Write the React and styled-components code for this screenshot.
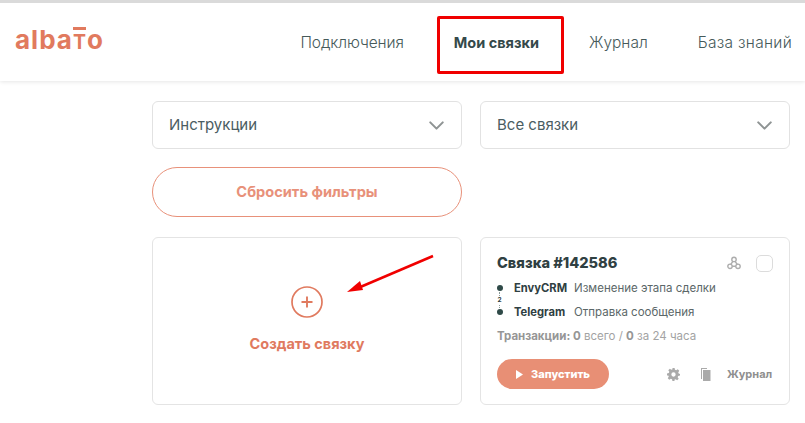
import React from "react";
import styled, { createGlobalStyle } from "styled-components";
import { ChevronDown } from "lucide-react";

const Global = createGlobalStyle`
  html, body {
    margin: 0;
    padding: 0;
    background: #fff;
    font-family: "Inter", "Noto Sans", sans-serif;
  }
`;

const Page = styled.div`
  position: relative;
  width: 805px;
  height: 423px;
  overflow: hidden;
  border-top: 3px solid #dadada;
  box-sizing: border-box;
`;

const Header = styled.header`
  height: 78px;
  padding-left: 15px;
  display: flex;
  align-items: center;
  justify-content: space-between;
  box-shadow: 0 1px 4px rgba(0, 0, 0, 0.1);
`;

const Logo = styled.div`
  font-size: 26px;
  line-height: 26px;
  font-weight: 700;
  letter-spacing: 1px;
  color: #e17a5e;
  margin-top: -3px;
`;

const LogoT = styled.span`
  position: relative;
  font-size: 19.5px;

  &::before {
    content: "";
    position: absolute;
    left: 0;
    right: 1px;
    top: -3px;
    height: 3px;
    background: #e17a5e;
  }
`;

const Nav = styled.nav`
  display: flex;
  align-items: center;
  padding-right: 13px;
  gap: 50px;
`;

const NavLink = styled.a`
  font-size: 15.5px;
  letter-spacing: ${(p) => p.$tracking || 0}px;
  font-weight: 300;
  color: #465a5a;
`;

const ActiveNavLink = styled.a`
  font-size: 14.5px;
  font-weight: 700;
  color: #34494a;
`;

const Main = styled.main`
  display: grid;
  grid-template-columns: 310px 310px;
  column-gap: 18px;
  padding: 20px 0 0 152px;
`;

const Select = styled.div`
  height: 48px;
  box-sizing: border-box;
  border: 1px solid #e2e2e2;
  border-radius: 6px;
  padding: 0 12px 2px 16px;
  display: flex;
  align-items: center;
  justify-content: space-between;
  font-size: 15px;
  color: #4b5d62;
  margin-bottom: 18px;

  svg {
    color: #8f9494;
    margin-top: 2px;
  }
`;

const ResetButton = styled.button`
  grid-column: 1;
  height: 50px;
  border: 1px solid #e8917a;
  border-radius: 25px;
  background: #fff;
  color: #e8917a;
  font-family: inherit;
  font-size: 14.6px;
  font-weight: 700;
  padding: 0 0 1px;
  margin-bottom: 20px;
`;

const Card = styled.section`
  height: 168px;
  box-sizing: border-box;
  border: 1px solid #e4e4e4;
  border-radius: 6px;
`;

const CreateCard = styled(Card)`
  grid-column: 1;
  display: flex;
  flex-direction: column;
  align-items: center;
  padding-top: 48px;
`;

const CreateLabel = styled.div`
  margin-top: 17px;
  font-size: 14.5px;
  font-weight: 700;
  color: #e07a5f;
`;

const LinkCard = styled(Card)`
  padding: 15px 16px 0;
  display: flex;
  flex-direction: column;
`;

const TitleRow = styled.div`
  display: flex;
  align-items: center;
`;

const Title = styled.h3`
  margin: 0;
  flex: 1;
  font-size: 14.6px;
  line-height: 20px;
  font-weight: 800;
  color: #2f4042;
`;

const Checkbox = styled.span`
  width: 17px;
  height: 17px;
  box-sizing: border-box;
  margin-left: 15px;
  border: 1px solid #dcdcdc;
  border-radius: 5px;
`;

const Steps = styled.div`
  position: relative;
  margin-top: 8px;
  display: flex;
  flex-direction: column;
  gap: 10px;
`;

const Step = styled.div`
  display: flex;
  align-items: center;
  height: 14px;
  font-size: 11.5px;
  color: #5b6768;

  &::before {
    content: "";
    flex: none;
    width: 6px;
    height: 6px;
    border-radius: 50%;
    background: #2f4a48;
    margin-right: 11px;
  }

  b {
    width: 60px;
    font-size: 11.2px;
    font-weight: 700;
    color: #2f4042;
  }
`;

const StepLine = styled.span`
  position: absolute;
  left: 2px;
  top: 11px;
  height: 16px;
  border-left: 1px dotted #8a9a98;
`;

const StepCount = styled.span`
  position: absolute;
  left: -1px;
  top: 15px;
  width: 7px;
  background: #fff;
  text-align: center;
  font-size: 6.5px;
  line-height: 8px;
  font-weight: 700;
  color: #2f4042;
`;

const Stats = styled.div`
  margin-top: 10px;
  font-size: 11.5px;
  line-height: 14px;
  color: #a3a3a3;

  b {
    font-weight: 700;
    color: #969696;
  }
`;

const Actions = styled.div`
  margin-top: 16px;
  display: flex;
  align-items: center;
`;

const RunButton = styled.button`
  width: 112px;
  height: 30px;
  border: 0;
  border-radius: 15px;
  background: #e88f75;
  color: #fff;
  font-family: inherit;
  font-size: 11px;
  font-weight: 800;
  display: flex;
  align-items: center;
  justify-content: center;
  gap: 8px;
  padding: 0;
  margin-right: 58px;
`;

const IconSlot = styled.span`
  display: flex;
  margin-right: ${(p) => p.$gap}px;
`;

const LogLink = styled.a`
  font-size: 11px;
  font-weight: 700;
  color: #8f8f8f;
`;

const Annotation = styled.div`
  position: absolute;
  left: 437px;
  top: 13px;
  width: 127px;
  height: 58px;
  box-sizing: border-box;
  border: 3px solid #f00000;
  border-radius: 2px;
`;

const Arrow = styled.svg`
  position: absolute;
  left: 340px;
  top: 249px;
`;

const PlusIcon = () => (
  <svg width="32" height="32" viewBox="0 0 32 32" fill="none" stroke="#e07a5f">
    <circle cx="16" cy="16" r="15" strokeWidth="1.7" />
    <path d="M16 10.5v11M10.5 16h11" strokeWidth="1.9" />
  </svg>
);

const NodesIcon = () => (
  <svg width="14" height="14" viewBox="0 0 14 14" fill="none" stroke="#adadad" strokeWidth="1.4">
    <circle cx="7" cy="3.4" r="2.2" />
    <circle cx="3" cy="10.3" r="2.2" />
    <circle cx="11" cy="10.3" r="2.2" />
    <path d="M6 5.4 3.8 8.2M8 5.4l2.2 2.8M5.2 10.3h3.6" />
  </svg>
);

const PlayIcon = () => (
  <svg width="7" height="9" viewBox="0 0 7 9" fill="#fff">
    <path d="M0 0l7 4.5-7 4.5z" />
  </svg>
);

const GearIcon = () => (
  <svg width="13" height="13" viewBox="0 0 24 24" fill="#aaaaaa">
    <path
      fillRule="evenodd"
      d="M10 0h4l.7 3.4 2.2.9L19.8 2.4l2.8 2.8-1.9 2.9.9 2.2L24 11v3l-3.4.7-.9 2.2 1.9 2.9-2.8 2.8-2.9-1.9-2.2.9L14 24h-4l-.7-3.4-2.2-.9-2.9 1.9-2.8-2.8 1.9-2.9-.9-2.2L0 14v-4l3.4-.7.9-2.2L2.4 4.2l2.8-2.8 2.9 1.9 2.2-.9zM12 8a4 4 0 100 8 4 4 0 000-8z"
    />
  </svg>
);

const CopyIcon = () => (
  <svg width="10" height="13" viewBox="0 0 10 13" fill="#aaaaaa">
    <path d="M0 0h6v1H1v10H0z" />
    <path d="M2 2h7.5v11H2z" />
  </svg>
);

export default function App() {
  return (
    <Page>
      <Global />
      <Header>
        <Logo>
          alba<LogoT>T</LogoT>o
        </Logo>
        <Nav>
          <NavLink $tracking={-0.1}>Подключения</NavLink>
          <ActiveNavLink>Мои связки</ActiveNavLink>
          <NavLink>Журнал</NavLink>
          <NavLink $tracking={0.3}>База знаний</NavLink>
        </Nav>
      </Header>
      <Main>
        <Select>
          Инструкции
          <ChevronDown size={25} strokeWidth={2} />
        </Select>
        <Select>
          Все связки
          <ChevronDown size={25} strokeWidth={2} />
        </Select>
        <ResetButton>Сбросить фильтры</ResetButton>
        <CreateCard>
          <PlusIcon />
          <CreateLabel>Создать связку</CreateLabel>
        </CreateCard>
        <LinkCard>
          <TitleRow>
            <Title>Связка #142586</Title>
            <NodesIcon />
            <Checkbox />
          </TitleRow>
          <Steps>
            <Step>
              <b>EnvyCRM</b>Изменение этапа сделки
            </Step>
            <StepLine />
            <StepCount>2</StepCount>
            <Step>
              <b>Telegram</b>Отправка сообщения
            </Step>
          </Steps>
          <Stats>
            <b>Транзакции: 0</b> всего / <b>0</b> за 24 часа
          </Stats>
          <Actions>
            <RunButton>
              <PlayIcon />
              Запустить
            </RunButton>
            <IconSlot $gap={21}>
              <GearIcon />
            </IconSlot>
            <IconSlot $gap={16}>
              <CopyIcon />
            </IconSlot>
            <LogLink>Журнал</LogLink>
          </Actions>
        </LinkCard>
      </Main>
      <Annotation />
      <Arrow width="100" height="50" viewBox="0 0 100 50">
        <path d="M93 4 18 36" stroke="#f00000" strokeWidth="2.5" />
        <path d="M7 40 20 29l3 9z" fill="#f00000" />
      </Arrow>
    </Page>
  );
}
